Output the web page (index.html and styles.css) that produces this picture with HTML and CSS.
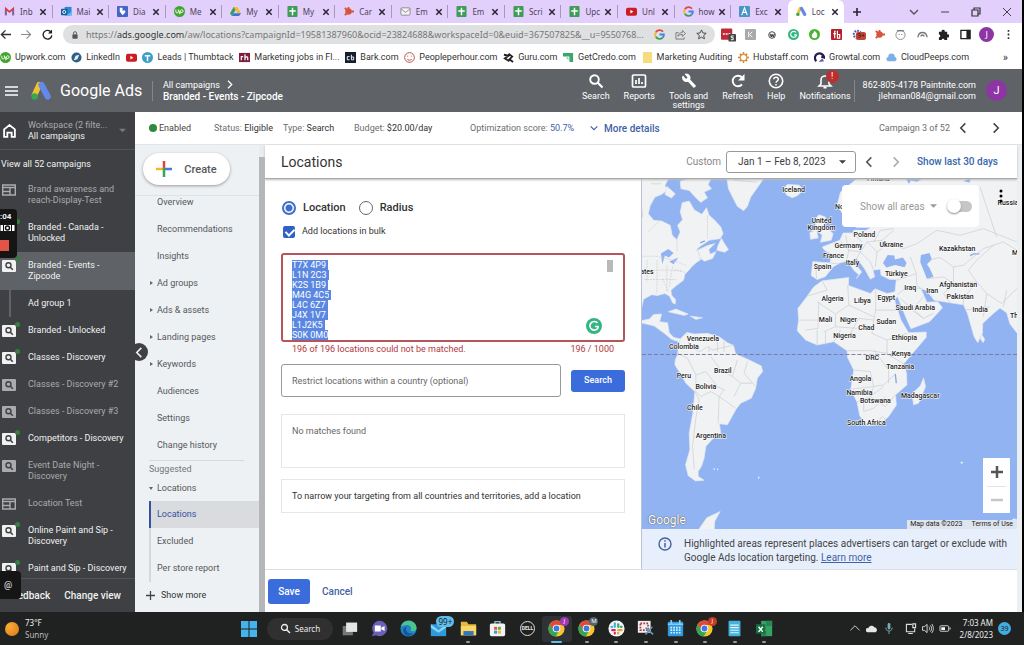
FILE: index.html
```html
<!DOCTYPE html>
<html lang="en">
<head>
<meta charset="utf-8">
<meta name="viewport" content="width=device-width, initial-scale=1">
<title>Locations - Google Ads</title>
<link rel="stylesheet" href="styles.css">
</head>
<body>
<svg class="defs" aria-hidden="true">
  <symbol id="close" viewBox="0 0 8 8"><path d="M1.3 1.3l5.4 5.4M6.7 1.3L1.3 6.7" stroke="#2b2433" stroke-width="1.5"/></symbol>
  <symbol id="gmail" viewBox="0 0 12 12"><path d="M2 10V3l4 3.4L10 3v7" fill="none" stroke="#d8403a" stroke-width="2"/><path d="M1 4v6h1.800V5zM11 4v6H9.200V5z" fill="#5f6fc0"/></symbol>
  <symbol id="outlook" viewBox="0 0 12 12"><path d="M4 1h7.500v9H4z" fill="#2b88d8"/><path d="M4 6l4 3 3.500-3v5H4z" fill="#69b9ee"/><rect y="3" width="7" height="7" rx="1" fill="#155b9e"/><circle cx="3.500" cy="6.500" r="1.700" fill="none" stroke="#fff"/></symbol>
  <symbol id="diag" viewBox="0 0 12 12"><rect width="12" height="12" rx="1" fill="#4565c8"/><path d="M3 2h3v3h3v2L6 10 3 6z" fill="#fff"/></symbol>
  <symbol id="upwork" viewBox="0 0 12 12"><circle cx="6" cy="6" r="6" fill="#3fa52c"/><path d="M2 4v2.200a1.400 1.400 0 0 0 2.800 0V4c.5 2 1.500 3.500 2.500 4M6 9l1-4c.7-1.500 3-1 3 .6S7.500 7.700 6.700 6" fill="none" stroke="#fff"/></symbol>
  <symbol id="drive" viewBox="0 0 12 12"><path d="M4 1h4L4 8 2 11 0 8z" fill="#35a05a"/><path d="M4 1h4l4 7H8z" fill="#f2bd2c"/><path d="M4 8h8l-2 3H2z" fill="#3d73d9"/></symbol>
  <symbol id="sheet" viewBox="0 0 12 12"><rect x=".5" width="11" height="12" rx="1" fill="#3f9d58"/><path d="M6 2v8M2.500 5.500h7" stroke="#fff" stroke-width="1.600"/></symbol>
  <symbol id="hubspot" viewBox="0 0 12 12"><circle cx="6" cy="6" r="3.500" fill="#d9533c"/><path d="M2 2l4 4-4 4M6 1v5h6" stroke="#d9533c" stroke-width="2" fill="none"/></symbol>
  <symbol id="mail" viewBox="0 0 12 12"><rect x="1" y="2" width="10" height="8" rx="1" fill="#f7f3f7" stroke="#8d8790"/><path d="M1 3l5 4 5-4" fill="none" stroke="#8d8790"/></symbol>
  <symbol id="youtube" viewBox="0 0 12 12"><rect y="2" width="12" height="8.500" rx="2" fill="#cc1d24"/><path d="M4.800 4.200L8 6.200 4.800 8.200z" fill="#fff"/></symbol>
  <symbol id="google" viewBox="0 0 12 12"><g fill="none" stroke-width="2"><path d="M9.800 3A4.800 4.800 0 0 0 2 3.500" stroke="#e04838"/><path d="M2 3.500a4.800 4.800 0 0 0 0 5" stroke="#f2b92f"/><path d="M2 8.500a4.800 4.800 0 0 0 7.300 1" stroke="#36a456"/><path d="M9.300 9.500A4.800 4.800 0 0 0 10.800 6H6" stroke="#4b7ee8"/></g></symbol>
  <symbol id="letterA" viewBox="0 0 12 12"><rect width="12" height="12" rx="1" fill="#4896c4"/><path d="M3 10l3-8 3 8M4 7h4" fill="none" stroke="#fff" stroke-width="1.200"/></symbol>
  <symbol id="ads" viewBox="0 0 22 20"><path d="M8.500 3.500L3.800 14" stroke="#f1c232" stroke-width="6" stroke-linecap="round"/><path d="M11 3.800l6.500 12" stroke="#6489ea" stroke-width="6.500" stroke-linecap="round"/><circle cx="3.800" cy="15.800" r="3.400" fill="#35a853"/></symbol>
  <symbol id="search" viewBox="0 0 16 16"><circle cx="6.500" cy="6.500" r="4.300" fill="none" stroke="currentColor" stroke-width="1.900"/><path d="M9.800 9.800l4.700 4.700" stroke="currentColor" stroke-width="2.200"/></symbol>
  <symbol id="left" viewBox="0 0 12 12"><path d="M8 1L3 6l5 5" fill="none" stroke="currentColor" stroke-width="1.700"/></symbol>
  <symbol id="right" viewBox="0 0 12 12"><path d="M4 1l5 5-5 5" fill="none" stroke="currentColor" stroke-width="1.700"/></symbol>
  <symbol id="down" viewBox="0 0 12 12"><path d="M2 4l4 4 4-4" fill="none" stroke="currentColor" stroke-width="1.400"/></symbol>
  <symbol id="tri" viewBox="0 0 8 8"><path d="M0 2h8L4 6z" fill="currentColor"/></symbol>
  <symbol id="camp" viewBox="0 0 14 12"><rect width="14" height="12" rx="1" fill="currentColor"/><circle cx="6.500" cy="5.300" r="2.500" fill="none" stroke="#3e4043" stroke-width="1.400"/><path d="M8.300 7.200l2.500 2.600" stroke="#3e4043" stroke-width="1.600"/></symbol>
  <symbol id="display" viewBox="0 0 14 12"><path d="M.7 1h12.600v10H.7zM.7 3.500h12.600M.7 7.500h7M8 4v7" fill="none" stroke="currentColor" stroke-width="1.400"/></symbol>
  <symbol id="grammarly" viewBox="0 0 16 16"><circle cx="8" cy="8" r="8" fill="#35b581"/><path d="M11.500 5A4.300 4.300 0 1 0 12 9.800V8.500H9" fill="none" stroke="#fff" stroke-width="1.600"/></symbol>
  <symbol id="chrome" viewBox="0 0 20 20"><circle cx="10" cy="10" r="9.500" fill="#f6c52f"/><path d="M1.800 5.200A9.500 9.500 0 0 1 18.500 6H10L6 12z" fill="#df4a3b"/><path d="M1.800 5.200A9.500 9.500 0 0 0 9 19.500L13.500 12 6.500 12z" fill="#36a455"/><circle cx="10" cy="10" r="4.500" fill="#fff"/><circle cx="10" cy="10" r="3.400" fill="#3c78df"/></symbol>
</svg>

<div class="screen">
  <header class="browser">
    <div class="tabbar">
      <div class="tabs">
        <div class="tab"><svg><use href="#gmail"/></svg><span>Inb</span><svg class="x"><use href="#close"/></svg></div>
        <div class="tab"><svg><use href="#outlook"/></svg><span>Mai</span><svg class="x"><use href="#close"/></svg></div>
        <div class="tab"><svg><use href="#diag"/></svg><span>Dia</span><svg class="x"><use href="#close"/></svg></div>
        <div class="tab"><svg><use href="#upwork"/></svg><span>Me</span><svg class="x"><use href="#close"/></svg></div>
        <div class="tab"><svg><use href="#drive"/></svg><span>My</span><svg class="x"><use href="#close"/></svg></div>
        <div class="tab"><svg><use href="#sheet"/></svg><span>My</span><svg class="x"><use href="#close"/></svg></div>
        <div class="tab"><svg><use href="#hubspot"/></svg><span>Car</span><svg class="x"><use href="#close"/></svg></div>
        <div class="tab"><svg><use href="#mail"/></svg><span>Em</span><svg class="x"><use href="#close"/></svg></div>
        <div class="tab"><svg><use href="#sheet"/></svg><span>Em</span><svg class="x"><use href="#close"/></svg></div>
        <div class="tab"><svg><use href="#sheet"/></svg><span>Scri</span><svg class="x"><use href="#close"/></svg></div>
        <div class="tab"><svg><use href="#sheet"/></svg><span>Upc</span><svg class="x"><use href="#close"/></svg></div>
        <div class="tab"><svg><use href="#youtube"/></svg><span>Unl</span><svg class="x"><use href="#close"/></svg></div>
        <div class="tab"><svg><use href="#google"/></svg><span>how</span><svg class="x"><use href="#close"/></svg></div>
        <div class="tab last"><svg><use href="#letterA"/></svg><span>Exc</span><svg class="x"><use href="#close"/></svg></div>
        <div class="tab active"><svg><use href="#ads"/></svg><span>Loc</span><svg class="x"><use href="#close"/></svg></div>
      </div>
      <button class="newtab" aria-label="New tab"><svg viewBox="0 0 10 10"><path d="M5 1v8M1 5h8" stroke="#2b2433" stroke-width="1.600"/></svg></button>
      <div class="winctl">
        <svg><use href="#down"/></svg>
        <svg viewBox="0 0 12 12"><path d="M2 6h8" stroke="#444"/></svg>
        <svg viewBox="0 0 12 12"><path d="M2 4h6v6H2zM4 4V2h6v6H8" fill="none" stroke="#333" stroke-width="1.200"/></svg>
        <svg viewBox="0 0 12 12"><path d="M2 2l8 8M10 2l-8 8" stroke="#444"/></svg>
      </div>
    </div>
    <div class="toolbar">
      <div class="nav">
        <svg viewBox="0 0 12 12"><path d="M12 6H2M6 1.500L1.500 6 6 10.500" fill="none" stroke="#333" stroke-width="1.500"/></svg>
        <svg viewBox="0 0 12 12"><path d="M0 6h10M6 1.500L10.500 6 6 10.500" fill="none" stroke="#8a8a8a" stroke-width="1.200"/></svg>
        <svg viewBox="0 0 12 12"><path d="M10 3.500A4.800 4.800 0 1 0 10.800 7" fill="none" stroke="#222" stroke-width="1.500"/><path d="M11 .5V5H6.500z" fill="#222"/></svg>
      </div>
      <div class="omnibox">
        <svg class="lock" viewBox="0 0 8 10"><rect x=".5" y="4" width="7" height="6" rx="1" fill="#555"/><path d="M2 4V2.500a2 2 0 0 1 4 0V4" fill="none" stroke="#555" stroke-width="1.200"/></svg>
        <div class="url">https://<b>ads.google.com</b>/aw/locations?campaignId=19581387960&amp;ocid=23824688&amp;workspaceId=0&amp;euid=367507825&amp;__u=9550768...</div>
        <svg><use href="#google"/></svg>
        <svg viewBox="0 0 12 12"><path d="M4 4H1v7h9V9M3 8c.5-3 2.500-4 5-4V1.500L11.500 5 8 8V6C6 6 4.500 6.500 3 8z" fill="none" stroke="#777"/></svg>
        <svg viewBox="0 0 12 12"><path d="M6 1l1.500 3.300 3.600.4-2.700 2.400.8 3.600L6 8.900l-3.200 1.800.8-3.600L.9 4.700l3.600-.4z" fill="none" stroke="#444"/></svg>
      </div>
      <div class="exts">
        <i><svg viewBox="0 0 16 14"><rect width="12" height="12" rx="1" fill="#c02a35"/><path d="M2 6h8" stroke="#fff" stroke-width="1.500" stroke-dasharray="2 1"/><rect x="8" y="6" width="8" height="8" rx="1" fill="#444"/><path d="M13.500 8H11v1.800h2V12h-2.500" fill="none" stroke="#fff"/></svg></i>
        <i><svg viewBox="0 0 12 12"><rect width="12" height="12" rx="1" fill="#a9a9a9"/><path d="M4 3v6M8 3L5 6l3 3" stroke="#fff" fill="none"/></svg></i>
        <i><svg class="sm" viewBox="0 0 12 12"><circle cx="6" cy="6" r="5" fill="#eee" stroke="#555" stroke-width="1.500"/><path d="M3 4l2 5 1-4 2 4 1.500-5" fill="none" stroke="#333" stroke-width="1.500"/></svg></i>
        <i><svg><use href="#grammarly"/></svg></i>
        <i><svg viewBox="0 0 12 12"><circle cx="6" cy="6" r="6" fill="#48b52e"/><path d="M6 2c2 2 3 3 3 5a3 3 0 0 1-6 0c0-1.500 2-2 3-5z" fill="#fff"/></svg></i>
        <i><svg viewBox="0 0 12 12"><rect width="12" height="12" rx="1" fill="#b41f2b"/><path d="M5 2.500H4V10M2.500 5h3M7 2v8h2.500V6H7" fill="none" stroke="#fff" stroke-width="1.300"/></svg></i>
        <i class="badged"><svg viewBox="0 0 12 12"><circle cx="6" cy="6" r="4" fill="none" stroke="#6762b3" stroke-width="2.500" stroke-dasharray="2 1"/></svg><em>9+</em></i>
        <i><svg><use href="#hubspot"/></svg></i>
        <i><svg viewBox="0 0 12 12"><circle cx="6" cy="6.500" r="5" fill="#fff" stroke="#888"/><path d="M2 2h8M4 6h1M7 6h1" stroke="#555"/></svg></i>
        <i><svg viewBox="0 0 12 12"><path d="M1 9c1-7 9-7 10 0M4 8c1-2 3-2 4 0" fill="none" stroke="#777" stroke-width="1.500"/></svg></i>
        <i><svg viewBox="0 0 12 12"><path d="M1 3h3a1.700 1.700 0 1 1 3.300 0H10v3a1.700 1.700 0 1 1 0 3v3H7a1.500 1.500 0 0 0-3 0H1V9a1.500 1.500 0 0 0 0-3z" fill="#222"/></svg></i>
        <i><svg viewBox="0 0 12 12"><path d="M1 1.500h10v9H1z" fill="none" stroke="#222" stroke-width="1.500"/><path d="M7 1h4v10H7z" fill="#222"/></svg></i>
        <i class="face">J</i>
        <i><svg viewBox="0 0 12 12"><path d="M6 1v2M6 5v2M6 9v2" stroke="#333" stroke-width="1.800"/></svg></i>
      </div>
    </div>
    <nav class="bookmarks">
      <a href="#"><svg><use href="#upwork"/></svg>Upwork.com</a>
      <a href="#"><svg viewBox="0 0 12 12"><circle cx="6" cy="6" r="5.500" fill="#2d6087"/><path d="M3 9l2-5 4-1-2 5z" fill="#e8f0f5"/></svg>LinkedIn</a>
      <a href="#" aria-label="YouTube"><svg><use href="#youtube"/></svg></a>
      <a href="#"><svg viewBox="0 0 12 12"><circle cx="6" cy="6" r="6" fill="#3c9fc9"/><path d="M3 4h6M6 4v6" stroke="#fff" stroke-width="1.600"/></svg>Leads | Thumbtack</a>
      <a href="#"><svg viewBox="0 0 12 12"><rect y="1" width="12" height="10" fill="#7a1e3c"/><path d="M2.500 9V5h2M6.500 2.500V9M6.500 6c1-1 3-1 3 0v3" fill="none" stroke="#fff" stroke-width="1.300"/></svg>Marketing jobs in Fl...</a>
      <a href="#"><svg viewBox="0 0 12 12"><rect width="12" height="12" fill="#14202e"/><path d="M5 5H2.500v3.500H5M7 3v5.500h2.500V5.500H7" fill="none" stroke="#fff"/></svg>Bark.com</a>
      <a href="#"><svg viewBox="0 0 12 12"><circle cx="6" cy="6" r="5.300" fill="#fff" stroke="#b5443c"/><path d="M3.500 4.500h1M7.500 4.500h1M3.500 7.500c1 2 4 2 5 0" fill="none" stroke="#b5443c"/></svg>Peopleperhour.com</a>
      <a href="#"><svg viewBox="0 0 12 12"><path d="M1 3l5 1-4 3 5 3M6 2l4 3-3 3 4 3" fill="none" stroke="#222" stroke-width="2"/></svg>Guru.com</a>
      <a href="#"><svg viewBox="0 0 12 12"><path d="M0 1h11v10H7V5H0z" fill="#39a86a"/><path d="M3 6h3v3z" fill="#88d0a5"/></svg>GetCredo.com</a>
      <a href="#"><svg viewBox="0 0 12 12"><path d="M1 0h10v12H1z" fill="#f5dc7e"/></svg>Marketing Auditing</a>
      <a href="#"><svg viewBox="0 0 12 12"><circle cx="6" cy="6" r="3.600" fill="none" stroke="#df9a43" stroke-width="1.500"/><path d="M6 0v2M6 10v2M0 6h2M10 6h2M2 2l1.500 1.500M10 2L8.500 3.500M2 10l1.500-1.500M10 10L8.500 8.500" stroke="#d37e31" stroke-width="1.600"/></svg>Hubstaff.com</a>
      <a href="#"><svg viewBox="0 0 12 12"><path d="M2.500 10A5 5 0 1 1 11 6L8 5" fill="none" stroke="#241d52" stroke-width="2.400"/><path d="M5 11l6-1-2-3z" fill="#5a55a9"/></svg>Growtal.com</a>
      <a href="#"><svg viewBox="0 0 12 12"><path d="M2 10a2.500 2.500 0 0 1 .5-4.800 3.500 3.500 0 0 1 7 0A2.500 2.500 0 0 1 10 10z" fill="#7cb0e8"/></svg>CloudPeeps.com</a>
      <span class="more">»</span>
    </nav>
  </header>

  <header class="adsbar">
    <button class="burger" aria-label="Menu"><svg viewBox="0 0 13 10"><path d="M0 1h13M0 5h13M0 9h13" stroke="#fff" stroke-width="1.500"/></svg></button>
    <svg class="logo"><use href="#ads"/></svg>
    <div class="brand">Google Ads</div>
    <div class="crumbs"><div>All campaigns <svg><use href="#right"/></svg></div><strong>Branded - Events - Zipcode</strong></div>
    <div class="tools">
      <button><svg><use href="#search"/></svg>Search</button>
      <button><svg viewBox="0 0 16 16"><rect x="1.500" y="2" width="13" height="12" rx="1" fill="none" stroke="#fff" stroke-width="1.700"/><path d="M5 7v4M8 5v6M11 9v2" stroke="#fff" stroke-width="1.700"/></svg>Reports</button>
      <button><svg viewBox="0 0 16 16"><path d="M7 6.500l7 7.500" stroke="#fff" stroke-width="3.200"/><path d="M2 2.500L5 6l1.500-1.500L3.500 1A4.200 4.200 0 1 1 1.500 3z" fill="#fff"/></svg>Tools and<br>settings</button>
      <button><svg viewBox="0 0 16 16"><path d="M12 11.500A5.300 5.300 0 1 1 12 4.500" fill="none" stroke="#fff" stroke-width="1.900"/><path d="M14.500 1v6.500H8z" fill="#fff"/></svg>Refresh</button>
      <button><svg viewBox="0 0 16 16"><circle cx="8" cy="8" r="6.700" fill="none" stroke="#fff" stroke-width="1.600"/><path d="M5.800 6.300c0-3 4.500-2.700 4.500 0C10.300 8 8 8 8 9.800M8 11v1.500" fill="none" stroke="#fff" stroke-width="1.500"/></svg>Help</button>
      <button class="bell"><svg viewBox="0 0 16 16"><path d="M2 13h12l-2-2V7a4 4 0 0 0-8 0v4z" fill="none" stroke="#fff" stroke-width="1.600"/><path d="M6.500 14.500h3" stroke="#fff" stroke-width="2"/></svg><em>!</em>Notifications</button>
    </div>
    <div class="account">862-805-4178 Paintnite.com<br>jlehman084@gmail.com</div>
    <div class="avatar">J</div>
  </header>

  <div class="body">
    <aside class="side">
      <div class="workspace"><svg class="home" viewBox="0 0 12 13"><path d="M1 5l5-4 5 4v7H8V8H4v4H1z" fill="none" stroke="#fff" stroke-width="1.700"/></svg><div><span>Workspace (2 filte...</span><br>All campaigns</div><svg class="tri"><use href="#tri"/></svg></div>
      <a class="viewall" href="#">View all 52 campaigns</a>
      <ul>
        <li class="off"><svg><use href="#display"/></svg>Brand awareness and reach-Display-Test</li>
        <li class="on early"><svg><use href="#camp"/></svg>Branded - Canada - Unlocked</li>
        <li class="on early cur"><svg><use href="#camp"/></svg>Branded - Events - Zipcode</li>
        <li class="group">Ad group 1</li>
        <li class="on"><svg><use href="#camp"/></svg>Branded - Unlocked</li>
        <li class="on"><svg><use href="#camp"/></svg>Classes - Discovery</li>
        <li class="off"><svg><use href="#camp"/></svg>Classes - Discovery #2</li>
        <li class="off"><svg><use href="#camp"/></svg>Classes - Discovery #3</li>
        <li class="on"><svg><use href="#camp"/></svg>Competitors - Discovery</li>
        <li class="off"><svg><use href="#camp"/></svg>Event Date Night - Discovery</li>
        <li class="off"><svg><use href="#display"/></svg>Location Test</li>
        <li class="on"><svg><use href="#camp"/></svg>Online Paint and Sip - Discovery</li>
        <li class="on"><svg><use href="#camp"/></svg>Paint and Sip - Discovery</li>
      </ul>
      <div class="sidefoot"><button>Feedback</button><button>Change view</button></div>
      <button class="collapse" aria-label="Collapse"><svg><use href="#left"/></svg></button>
      <div class="recorder"><span>:04</span><svg viewBox="0 0 14 6"><path d="M0 0h14v6H0z" fill="#fff"/><circle cx="7" cy="3" r="2" fill="none" stroke="#111" stroke-width="1.500"/><path d="M3 0v6M11 0v6" stroke="#111"/></svg><b></b></div>
      <div class="at">@</div>
    </aside>

    <div class="content">
      <div class="status">
        <span class="enabled">Enabled</span>
        <span>Status: <b>Eligible</b></span>
        <span>Type: <b>Search</b></span>
        <span>Budget: <b>$20.00/day</b></span>
        <span>Optimization score: <a href="#">50.7%</a></span>
        <a class="details" href="#"><svg><use href="#down"/></svg>More details</a>
        <span class="count">Campaign 3 of 52</span>
        <button aria-label="Previous campaign"><svg><use href="#left"/></svg></button>
        <button aria-label="Next campaign"><svg><use href="#right"/></svg></button>
      </div>
      <div class="panes">
        <nav class="pages">
          <div class="createbox"><button class="create"><svg viewBox="0 0 16 16"><path d="M8 0v8" stroke="#d9453a" stroke-width="2.500"/><path d="M8 8h8" stroke="#4a78dc" stroke-width="2.500"/><path d="M0 8h8" stroke="#f0b92e" stroke-width="2.500"/><path d="M8 7v9" stroke="#3aa356" stroke-width="2.500"/></svg>Create</button></div>
          <div class="links">
            <a href="#">Overview</a>
            <a href="#">Recommendations</a>
            <a href="#">Insights</a>
            <a href="#" class="sub">Ad groups</a>
            <a href="#" class="sub">Ads &amp; assets</a>
            <a href="#" class="sub">Landing pages</a>
            <a href="#" class="sub">Keywords</a>
            <a href="#">Audiences</a>
            <a href="#">Settings</a>
            <a href="#">Change history</a>
            <div class="suggested">Suggested</div>
            <a href="#" class="open">Locations</a>
            <div class="children"><a href="#" class="sel">Locations</a><a href="#">Excluded</a><a href="#">Per store report</a></div>
            <a href="#" class="showmore"><svg viewBox="0 0 10 10"><path d="M5 0v10M0 5h10" stroke="#444" stroke-width="1.400"/></svg>Show more</a>
          </div>
        </nav>
        <div class="scroll"><i></i></div>
        <main>
          <div class="titlebar">
            <h1>Locations</h1>
            <label for="range">Custom</label>
            <div class="range"><select id="range"><option>Jan 1 – Feb 8, 2023</option></select><svg><use href="#tri"/></svg></div>
            <button aria-label="Previous period"><svg><use href="#left"/></svg></button>
            <button class="dim" aria-label="Next period"><svg><use href="#right"/></svg></button>
            <a href="#">Show last 30 days</a>
          </div>
          <div class="split">
            <form class="form">
              <div class="radios">
                <label><input type="radio" name="mode" checked>Location</label>
                <label><input type="radio" name="mode">Radius</label>
              </div>
              <label class="bulk"><input type="checkbox" checked>Add locations in bulk</label>
              <div class="bulkbox">
                <textarea id="codes" aria-label="Locations" spellcheck="false">T7X 4P9
L1N 2C3
K2S 1B9
M4G 4C5
L4C 6Z7
J4X 1V7
L1J2K5
S0K 0M0</textarea>
                <i class="thumb"></i><svg class="gram"><use href="#grammarly"/></svg>
              </div>
              <div class="error"><span>196 of 196 locations could not be matched.</span><span>196 / 1000</span></div>
              <div class="country"><input type="text" aria-label="Restrict locations within a country" placeholder="Restrict locations within a country (optional)"><button type="button" class="primary">Search</button></div>
              <div class="box nomatch">No matches found</div>
              <div class="box narrow">To narrow your targeting from all countries and territories, add a location</div>
            </form>
            <section class="mapcol">
              <div class="map">
                <svg class="world" viewBox="0 0 376 352" preserveAspectRatio="xMidYMid slice">
                  <rect width="376" height="352" fill="#92b3f1"/>
                  <g transform="translate(-1 -8) scale(.3333)">
                    <g fill="#f1f2f3" stroke="#e3e8f1" stroke-width="2">
                      <path d="M0 20H85L72 45 80 58 62 72 42 80 28 105 22 130 38 150 62 152 88 165 94 195 108 208 118 185 110 165 125 148 118 125 124 97 145 92 160 118 183 132 197 112 205 135 222 150 240 170 247 190 238 205 205 210 175 230 165 242 200 226 222 220 204 238 208 252 226 244 215 265 190 273 182 266 165 278 152 290 142 302 132 312 128 330 104 348 90 360 92 375 104 388 103 402 95 398 86 378 72 370 50 376 32 374 8 387 3 408 0 420z"/>
                      <path d="M0 452L25 447 38 433 62 432 56 455 80 458 85 488 98 502 122 508 116 516 92 508 70 490 40 468 0 458z"/>
                      <path d="M120 505L138 487 160 492 200 490 235 500 260 518 278 526 285 552 330 572 362 588 366 605 350 625 345 655 332 685 300 700 286 718 260 765 236 762 240 790 215 808 195 830 190 865 182 890 172 905 172 920 190 932 164 934 142 918 134 885 147 840 145 790 156 730 162 665 135 640 118 610 102 585 103 570 110 555 112 535z"/>
                      <path d="M258 20H372L350 52 330 80 320 108 309 121 290 108 278 85 263 55z"/>
                      <path d="M118 32L155 22 212 22 202 42 212 55 190 65 200 82 180 96 165 82 145 60 120 55zM78 48L103 70 92 83 72 72zM232 225L242 204 250 218 263 238 252 246 228 240z"/>
                      <path d="M428 55L440 42 475 44 490 58 470 76 455 82 438 74zM522 150L535 133 555 140 552 165 578 190 572 210 540 216 545 195 530 180zM508 187L528 178 533 203 510 207z"/>
                      <path d="M655 20L600 65 590 105 620 150 650 168 635 188 608 188 598 210 545 230 552 240 574 252 568 278 517 274 512 316 530 328 554 320 578 290 598 278 622 272 640 300 655 314 648 325 664 305 636 270 648 263 672 295 690 327 703 320 698 300 720 297 722 315 748 328 768 328 764 365 740 370 704 356 690 370 624 346 625 322 545 332 520 350 500 378 472 415 474 450 470 482 495 510 530 525 580 515 620 542 621 562 640 600 631 658 650 697 658 738 680 768 722 762 745 740 768 706 766 675 800 645 799 610 790 582 812 556 858 502 858 486 805 488 782 450 762 388 772 380 796 440 812 476 868 455 907 413 893 395 860 396 842 355 860 362 882 390 930 398 970 404 982 430 1002 500 1013 518 1027 490 1028 460 1060 430 1080 414 1100 428 1110 462 1140 500V20z"/>
                      <path d="M850 624L856 650 835 700 820 705 815 672 840 648zM1024 492L1034 508 1029 518 1022 508zM82 425L105 417 142 432 130 436zM148 438L185 443 165 448zM172 1082L198 1045 238 1026 222 1055 220 1082zM1112 1058L1120 1048 1131 1050V1060z"/>
                    </g>
                    <path d="M728 278L742 254 762 256 764 268 788 262 799 278 793 291 765 284 738 292zM842 254L868 248 875 268 860 282 868 293 880 320 860 326 850 300 840 275zM60 250L82 236 98 248 84 262 72 256 64 282zM85 274L112 262 98 282zM795 22H852L830 34 812 30 806 40zM970 32L994 22 988 36zM612 172H690L675 180 640 178z" fill="#92b3f1"/>
                    <path d="M990 256L1000 251 1018 251M750 552L754 560M765 612L768 640M178 218L192 212" fill="none" stroke="#87a8df" stroke-width="4"/>
                    <g fill="none" stroke="#c9cbce" stroke-width="2">
                      <path d="M0 258H45L95 270 135 285M8 300H125M10 328H105M18 270V335M48 270V370M78 285V365M95 290L85 350M108 208L108 245M20 185L58 150M200 135V205M170 235L180 270M100 300L132 306M65 325L82 365" stroke-dasharray="6 3"/>
                      <path d="M545 332L560 360 500 378M530 395L585 432 625 405 622 345M535 395L532 475 495 480M585 432L585 470 550 485M625 405L700 440M706 360V420H775M706 420L700 450 655 445 630 490M700 450L695 490 740 510 800 490M585 470L650 475M555 485V525M530 480V525M620 542H690L740 550 790 582M740 510L740 555M640 600L690 605 700 650 730 645 765 612M632 658L700 650 690 680M650 697L690 680 730 650M690 680L735 710 765 675M700 540L745 600 745 640M475 450H535M580 515L600 480"/>
                      <path d="M720 760a7 9 0 1 0 12-15a7 9 0 1 0-12 15M670 690V725L700 715 735 680"/>
                      <path d="M525 276L528 325M568 278L600 282M600 212L625 240 618 272M615 195L625 240 660 245 680 215 725 210 760 180M635 188L665 215M660 245L650 263M680 215L710 245 725 235M710 245L705 290M660 245L690 275 700 300M700 215L720 180 760 175M720 210L790 235 830 220 890 180 960 195 1030 175 1131 215M870 268L900 262 940 290 970 285 1030 235 1090 215 1131 240M770 330L828 310 830 345 842 355M828 310L810 260M770 375L800 350 842 355M862 326L910 320 940 340 910 370 930 398M940 340L1010 335 970 385 970 404M1010 335L985 300 1010 270 1060 225M1010 335L1040 370 1085 400M1040 370L1030 440M1085 400L1131 355M1090 410L1100 360M850 380L815 420 850 445 880 430M780 385L850 445M975 420L1050 410M940 290L940 340M860 60L900 160M1020 50L1050 140 1070 200"/>
                      <path d="M138 490L145 530 178 545 200 530 215 540 280 525M110 550L140 565 165 615 195 605 230 650 250 660 235 680 285 715M165 615L165 665 180 680 210 665 235 680M162 665L175 690 165 745 155 830 160 900M235 680L232 760M205 530V545M230 510V545M250 515V545M290 570L275 620 300 640 280 680M320 575L310 610 345 650M300 640L335 640M275 620L240 600 210 560"/>
                      <path d="M0 100L5 140M60 40L30 40M280 30L350 35"/>
                    </g>
                    <path d="M218 898H222M229 899H232M352 924H356M962 879H968" stroke="#f1f2f3" stroke-width="5"/>
                  </g>
                  <path d="M0 176.500H376" stroke="#8278a4" stroke-dasharray="4 2"/>
                  <g class="names">
                    <text x="152" y="14">Iceland</text><text x="237" y="3">Finland</text><text x="198" y="31">No</text><text x="367" y="27">Russia</text>
                    <text x="180" y="45">United</text><text x="180" y="52">Kingdom</text><text x="223" y="59">Poland</text><text x="207" y="70">Germany</text><text x="250" y="69">Ukraine</text><text x="316" y="73">Kazakhstan</text><text x="374" y="77">M</text>
                    <text x="192" y="80">France</text><text x="181" y="91">Spain</text><text x="211" y="87">Italy</text><text x="255" y="98">Türkiye</text><text x="269" y="112">Iraq</text><text x="291" y="115">Iran</text><text x="317" y="109">Afghanistan</text><text x="319" y="121">Pakistan</text><text x="339" y="134">India</text><text x="373" y="140">Th</text>
                    <text x="5" y="96">ates</text><text x="191" y="123">Algeria</text><text x="221" y="125">Libya</text><text x="245" y="122">Egypt</text><text x="274" y="132">Saudi Arabia</text><text x="184" y="144">Mali</text><text x="207" y="144">Niger</text><text x="225" y="152">Chad</text><text x="245" y="146">Sudan</text><text x="203" y="160">Nigeria</text><text x="263" y="162">Ethiopia</text><text x="260" y="178">Kenya</text><text x="231" y="182">DRC</text><text x="259" y="191">Tanzania</text><text x="219" y="203">Angola</text><text x="218" y="217">Namibia</text><text x="234" y="225">Botswana</text><text x="279" y="220">Madagascar</text><text x="225" y="247">South Africa</text>
                    <text x="61" y="163">Venezuela</text><text x="42" y="171">Colombia</text><text x="81" y="195">Brazil</text><text x="42" y="200">Peru</text><text x="64" y="211">Bolivia</text><text x="53" y="232">Chile</text><text x="69" y="260">Argentina</text>
                  </g>
                </svg>
                <div class="areas"><span>Show all areas</span><svg><use href="#tri"/></svg><input type="checkbox" aria-label="Show all areas"></div>
                <svg class="kebab" viewBox="0 0 4 14"><circle cx="2" cy="2" r="1.500"/><circle cx="2" cy="7" r="1.500"/><circle cx="2" cy="12" r="1.500"/></svg>
                <div class="zoom"><button aria-label="Zoom in"><svg viewBox="0 0 12 12"><path d="M6 0v12M0 6h12" stroke="#555" stroke-width="2.500"/></svg></button><button aria-label="Zoom out"><svg viewBox="0 0 12 12"><path d="M0 6h12" stroke="#c6c6c6" stroke-width="2.500"/></svg></button></div>
                <div class="gword">Google</div>
                <div class="terms"><span>Map data ©2023</span><a href="#">Terms of Use</a></div>
              </div>
              <div class="info"><svg viewBox="0 0 14 14"><circle cx="7" cy="7" r="6" fill="none" stroke="#40629f" stroke-width="1.400"/><path d="M7 6v4.500M7 3.300v1.500" stroke="#40629f" stroke-width="1.500"/></svg><p>Highlighted areas represent places advertisers can target or exclude with Google Ads location targeting. <a href="#">Learn more</a></p></div>
            </section>
          </div>
          <div class="actions"><button class="primary">Save</button><button class="cancel">Cancel</button></div>
        </main>
        <div class="gutter"></div>
      </div>
    </div>
  </div>

  <footer class="taskbar">
    <div class="weather"><i></i><div>73°F<br><span>Sunny</span></div></div>
    <svg class="win" viewBox="0 0 16 16"><path d="M0 0h7.500v7.500H0zM8.500 0H16v7.500H8.500zM0 8.500h7.500V16H0zM8.500 8.500H16V16H8.500z" fill="#45b4ec"/></svg>
    <button class="tsearch"><svg><use href="#search"/></svg>Search</button>
    <div class="apps">
      <i><svg viewBox="0 0 20 20"><path d="M2 7h12v11H2z" fill="#777"/><path d="M6 3h13v11H6z" fill="#e5e5e5"/></svg></i>
      <i><svg viewBox="0 0 20 20"><path d="M10 1a9 9 0 1 1-4 17l-5 1 2-4A9 9 0 0 1 10 1z" fill="#6a60b8"/><path d="M4.500 6.500h7v7h-7zM12 9l4-2v6l-4-2z" fill="#fff"/></svg></i>
      <i><svg viewBox="0 0 20 20"><circle cx="10" cy="10" r="9.500" fill="#2283c9"/><path d="M1 8C3-1 18-2 19.500 9c0 5-6 5-7 3 2-3-1-6-4-6S2 7 1 8z" fill="#4cc58a"/><path d="M8 8c-3 4 1 9 8 8-4 4-11 3-12-2-1-3 1-6 4-6z" fill="#14559b"/></svg></i>
      <i class="mailapp"><svg viewBox="0 0 20 20"><path d="M1 5h18v14H1z" fill="#2d9bdc"/><path d="M1 5l9 7 9-7v4l-9 6-9-6z" fill="#8bd3f5"/></svg><em>99+</em></i>
      <i class="run"><svg viewBox="0 0 20 20"><path d="M1 2h7l2 3h9v13H1z" fill="#e9b63a"/><path d="M1 7h18v11H1z" fill="#f9d668"/><path d="M4 13h12v5H4z" fill="#2f78c0"/></svg></i>
      <i><svg viewBox="0 0 20 20"><path d="M7 5V2h6v3" fill="none" stroke="#8ac4dd" stroke-width="1.500"/><rect x="1" y="4" width="18" height="15" rx="2" fill="#f3f3f3"/><path d="M6 8h3.500v3.500H6z" fill="#e05b3d"/><path d="M10.500 8H14v3.500h-3.500z" fill="#6caa43"/><path d="M6 12.500h3.500V16H6z" fill="#3b96d2"/><path d="M10.500 12.500H14V16h-3.500z" fill="#e9b93b"/></svg></i>
      <i class="dell"><b>DELL</b></i>
      <i class="act"><svg><use href="#chrome"/></svg><em class="p">J</em></i>
      <i class="run"><svg><use href="#chrome"/></svg><em class="g">M</em></i>
      <i class="run"><svg viewBox="0 0 20 20"><circle cx="10" cy="10" r="9.500" fill="#f5f5f5"/><g stroke-width="2.600" stroke-linecap="round"><path d="M8 4v4" stroke="#41b4da"/><path d="M4 8h1" stroke="#41b4da"/><path d="M12 5v3M15 8h1" stroke="#3aa679"/><path d="M5 12h3M8 15v1" stroke="#cf2b5d"/><path d="M12 12h4M12 15v1" stroke="#e1ac33"/></g></svg></i>
      <i class="run"><svg viewBox="0 0 20 20"><rect x="1" y="1" width="15" height="14" fill="#f3eeee"/><path d="M4 4h9v8H4z" fill="none" stroke="#a93b47" stroke-width="2" stroke-dasharray="2 1.500"/><path d="M18 8l-8 9M10 9l9 8" stroke="#6598b0" stroke-width="2"/></svg></i>
      <i class="run"><svg viewBox="0 0 20 20"><rect x="1" y="2" width="18" height="17" rx="1" fill="#2f9bdf"/><path d="M1 5h18M5 0v4M15 0v4" stroke="#8bcaf0" stroke-width="2"/><path d="M4 9h12M4 12h12M4 15h12" stroke="#d6effc" stroke-width="2" stroke-dasharray="2 1.300"/></svg></i>
      <i class="run"><svg><use href="#chrome"/></svg><em class="r">J</em></i>
      <i class="run"><svg viewBox="0 0 20 20"><rect x="3" y="1" width="14" height="18" rx="1" fill="#45b2dd"/><path d="M5 6h10M5 9h10M5 12h10M5 15h10" stroke="#e3f5fc" stroke-width="1.300"/></svg></i>
      <i class="run"><svg viewBox="0 0 20 20"><path d="M6 1h13v18H6z" fill="#35a364"/><path d="M12 1h7v6h-7zM6 13h6v6H6z" fill="#2a8552"/><path d="M0 5h11v11H0z" fill="#17703f"/><path d="M3 8l5 6M8 8l-5 6" stroke="#fff" stroke-width="1.700"/></svg></i>
    </div>
    <div class="tray">
      <svg viewBox="0 0 12 12"><path d="M1 8l5-5 5 5" fill="none" stroke="#ddd"/></svg>
      <svg viewBox="0 0 12 12"><path d="M1 10a2.300 2.300 0 0 1 1-4.500 3.800 3.800 0 0 1 6.500-1A3 3 0 0 1 10 10z" fill="#e6e6e6"/></svg>
      <svg viewBox="0 0 12 12"><rect x="4.500" y="0" width="3" height="7" rx="1.500" fill="#78b0ad"/><path d="M2.500 5c0 5 7 5 7 0M6 9v3" fill="none" stroke="#78b0ad"/></svg>
      <svg class="net" viewBox="0 0 12 12"><path d="M7 1.500H1v8h9V6M3 11.500h5M8 1h3v4H8z" fill="none" stroke="#ddd" stroke-width="1.200"/></svg>
      <svg viewBox="0 0 12 12"><path d="M0 4h2l3-2.500v9L2 8H0zM7 4c1 1 1 3 0 4M8.500 2.500c2 2 2 5 0 7M10 1c2.500 3 2.500 7 0 10" fill="none" stroke="#ddd"/></svg>
      <svg viewBox="0 0 12 12"><rect x=".5" y="3" width="9.500" height="6" rx="1" fill="none" stroke="#ddd"/><path d="M2 4.500h4v3H2zM11 5h1v2h-1z" fill="#fff"/></svg>
      <div class="clock">7:03 AM<br>2/8/2023</div>
      <b>39</b>
    </div>
  </footer>
</div>
<script src="main.js"></script>
</body>
</html>
```

FILE: styles.css
```css
* { box-sizing: border-box; }
body { margin: 0; background: #000; font: 9px/11px Roboto, "Liberation Sans", sans-serif; color: #3c4043; }
button, input, select, textarea { font: inherit; color: inherit; }
button { border: 0; padding: 0; background: none; display: flex; align-items: center; justify-content: center; }
a { color: inherit; text-decoration: none; }
svg { display: block; flex: none; }
i, em { font-style: normal; }
.defs { position: absolute; width: 0; height: 0; }
.screen { height: 100vh; min-height: 645px; display: flex; flex-direction: column; overflow: hidden; }

/* browser */
.browser { background: #fff; margin-right: 2px; font-family: "Noto Sans", "Open Sans", sans-serif; }
.tabbar { height: 23px; background: #e2cffc; display: flex; align-items: stretch; }
.tabs { flex: none; width: 83%; margin-left: -4px; display: grid; grid-template-columns: repeat(15, 1fr); }
.tab { display: flex; align-items: center; padding-left: 8px; gap: 5px; min-width: 0; position: relative; color: #4e4359; font-size: 8px; }
.tab:not(.last):not(.active)::after { content: ""; position: absolute; right: 0; top: 5px; height: 13px; border-right: 1px solid #a899bb; }
.tab svg { width: 11px; height: 11px; }
.tab span { width: 14px; white-space: nowrap; }
.tab .x { width: 8px; height: 8px; }
.tab.active { background: #fff; border-radius: 6px 6px 0 0; }
.newtab { width: 26px; }
.newtab svg { width: 10px; height: 10px; }
.winctl { margin-left: auto; display: flex; align-items: center; gap: 19px; padding-right: 9px; color: #555; }
.winctl svg { width: 12px; height: 12px; }
.toolbar { height: 23px; display: flex; align-items: center; }
.nav { flex: none; width: 63px; display: flex; gap: 10px; }
.nav svg { width: 11px; height: 11px; }
.omnibox { flex: 1; min-width: 0; height: 19px; border-radius: 10px; background: #dfe0e1; display: flex; align-items: center; gap: 10px; padding: 0 8px 0 9px; color: #777; font-size: 9px; }
.omnibox svg { width: 11px; height: 11px; }
.omnibox .lock { width: 6px; height: 8px; }
.url { flex: 1; min-width: 0; white-space: nowrap; margin-left: -2px; }
.url b { font-weight: 400; color: #333; }
.exts { flex: none; width: 301px; margin-left: 3px; margin-right: 3px; display: grid; grid-template-columns: repeat(14, 1fr); }
.exts i { display: grid; place-items: center; position: relative; }
.exts svg { width: 11px; height: 11px; }
.exts i:first-child svg { width: 15px; height: 14px; }
.exts svg.sm { width: 8px; height: 8px; }
.exts em { position: absolute; left: 9px; top: 5px; background: #c2463a; color: #3a1010; font-size: 7px; line-height: 8px; border-radius: 2px; padding: 0 1px; }
.exts .face { width: 15px; height: 15px; border-radius: 50%; background: #8e35a5; color: #fff; place-self: center; }
.bookmarks { height: 23px; display: flex; align-items: center; justify-content: space-between; padding-right: 14px; font: 9px/11px Roboto, sans-serif; color: #333; white-space: nowrap; }
.bookmarks a { display: flex; align-items: center; gap: 4px; }
.bookmarks svg { width: 11px; height: 11px; }
.bookmarks .more { margin-left: 28px; font-size: 11px; }

/* ads header */
.adsbar { height: 43px; flex: none; margin-right: 2px; background: #5f6367; color: #fff; display: flex; align-items: center; padding-left: 5px; }
.burger svg { width: 13px; height: 10px; }
.logo { width: 21px; height: 20px; margin-left: 13px; }
.brand { margin-left: 8px; width: 93px; font-size: 16px; line-height: 20px; border-right: 1px solid #85888b; }
.crumbs { margin-left: 10px; font-size: 9px; line-height: 12px; }
.crumbs div { display: flex; align-items: center; gap: 5px; }
.crumbs svg { width: 9px; height: 9px; }
.crumbs strong { font-weight: 500; font-size: 10px; }
.tools { margin-left: auto; align-self: stretch; display: flex; gap: 14px; padding: 4px 3px 0 0; }
.tools button { flex-direction: column; justify-content: flex-start; line-height: 9px; font-size: 9px; font-weight: 400; position: relative; }
.tools svg { width: 16px; height: 16px; margin-bottom: 3px; }
.tools em { position: absolute; right: 12px; top: -3px; width: 13px; height: 13px; border-radius: 50%; background: #bd2f2f; line-height: 13px; font-size: 9px; }
.account { border-left: 1px solid #85888b; text-align: right; font-size: 9px; padding-left: 8px; white-space: nowrap; }
.avatar { width: 21px; height: 21px; margin: 0 15px 0 10px; border-radius: 50%; background: #8e35a5; text-align: center; line-height: 21px; font-size: 11px; }

/* campaigns sidebar */
.body { flex: 1; min-height: 0; display: flex; margin-right: 2px; }
.side { flex: none; width: 135px; background: #3e4043; color: #f1f1f1; position: relative; display: flex; flex-direction: column; }
.workspace { height: 38px; flex: none; display: flex; align-items: center; border-bottom: 1px solid #525458; padding: 0 9px 0 3px; gap: 12px; white-space: nowrap; }
.workspace span { color: #a9abad; }
.workspace .home { width: 13px; height: 14px; }
.workspace .tri { width: 7px; height: 7px; color: #77797c; margin-left: auto; }
.viewall { height: 26px; flex: none; line-height: 28px; padding-left: 1px; }
.side ul { list-style: none; margin: 0; padding: 0; flex: 1; min-height: 0; overflow: hidden; }
.side li { position: relative; padding: 8px 3px 8px 28px; }
.side li.on::after { content: ""; position: absolute; left: 15px; top: 5px; width: 5px; height: 5px; border-radius: 50%; background: #34803f; }
.side li svg { position: absolute; left: 2px; top: 8px; width: 14px; height: 12px; }
.side li.off { color: #a9abad; }
.side li.early { padding-right: 30px; }
.side li.cur { background: #5f6266; }
.side li.group::before { content: ""; position: absolute; left: 9px; top: 0; bottom: 0; border-left: 2px solid #606367; }
.sidefoot { flex: none; height: 34px; border-top: 1px solid #525458; display: flex; gap: 14px; font-size: 10px; font-weight: 500; padding-left: 7px; }
.collapse { position: absolute; right: -13px; top: 231px; width: 18px; height: 18px; border-radius: 50%; background: #3e4043; z-index: 2; }
.collapse svg { width: 11px; height: 11px; }
.recorder { position: absolute; left: 0; top: 97px; width: 17px; height: 49px; border-radius: 0 4px 4px 0; background: #151515; overflow: hidden; font-size: 8px; line-height: 16px; font-weight: 700; }
.recorder svg { width: 15px; height: 6px; }
.recorder b { display: block; width: 9px; height: 11px; margin-top: 9px; background: #e25445; }
.at { position: absolute; left: 0; bottom: 13px; width: 21px; height: 28px; background: #151515; border-radius: 0 4px 4px 0; line-height: 28px; padding-left: 4px; font-size: 9px; }

/* status */
.content { flex: 1; min-width: 0; display: flex; flex-direction: column; }
.status { height: 33px; flex: none; background: #fff; border-bottom: 1px solid #e2e4e6; display: grid; grid-template-columns: 65px 69px 71px 116px 119px 1fr 74px 16px 32px; align-items: center; padding: 0 21px 0 14px; color: #6a6d70; white-space: nowrap; }
.status b { font-weight: 400; color: #333; }
.status a { color: #3f62a8; }
.enabled { display: flex; align-items: center; gap: 2px; color: #444; }
.enabled::before { content: ""; width: 8px; height: 8px; border-radius: 50%; background: #2d8a3e; }
.status .details { display: flex; align-items: center; gap: 5px; font-weight: 500; font-size: 10px; }
.status svg { width: 11px; height: 12px; color: #444; }
.status .details svg { color: #3f62a8; width: 10px; }
.status button { justify-self: end; }

/* page nav */
.panes { flex: 1; min-height: 0; display: flex; }
.pages { flex: none; width: 124px; background: #edf1f3; display: flex; flex-direction: column; color: #55585c; }
.createbox { height: 51px; flex: none; border-bottom: 1px solid #dfe2e5; padding: 8px; }
.create { width: 87px; height: 32px; border-radius: 16px; background: #fff; box-shadow: 0 1px 3px #999; gap: 12px; font-size: 11px; font-weight: 500; }
.create svg { width: 16px; height: 16px; }
.links { flex: 1; min-height: 0; overflow: hidden; padding-left: 14px; margin-top: -7px; }
.links a { display: block; line-height: 27px; padding-left: 8px; position: relative; }
.links .sub::before, .links .open::before { content: ""; position: absolute; left: 1px; top: 11px; border-left: 3px solid #666; border-top: 2px solid transparent; border-bottom: 2px solid transparent; }
.suggested { border-top: 1px solid #d7dadd; margin: 1px 15px 0 0; line-height: 15px; padding-top: 1px; color: #777; }
.links .open { line-height: 22px; }
.links .open::before { left: 0; top: 10px; border-top: 3px solid #666; border-left: 2px solid transparent; border-right: 2px solid transparent; border-bottom: 0; }
.children { border-left: 2px solid #d5d8da; margin-top: 2px; }
.children a { padding-left: 6px; }
.children .sel { background: #d9dbdf; color: #34529d; box-shadow: -2px 0 #34529d; }
.links .showmore { display: flex; align-items: center; padding: 0; margin-left: -3px; gap: 6px; font-weight: 400; color: #333; }
.showmore svg { width: 9px; height: 9px; }
.scroll { width: 6px; flex: none; background: #e9ebed; padding-top: 12px; }
.scroll i { display: block; height: 100%; background: #b5b6b8; }
.gutter { flex: none; width: 5px; background: #eceff2; }

/* main */
main { flex: 1; min-width: 0; display: flex; flex-direction: column; background: #fff; }
.titlebar { position: relative; z-index: 1; height: 34px; flex: none; display: flex; align-items: center; padding: 0 19px 0 16px; border-bottom: 1px solid #aaa; box-shadow: 0 1px 2px #bbb; white-space: nowrap; }
h1 { flex: 1; margin: 0; font-size: 14px; font-weight: 400; line-height: 20px; color: #333; }
.titlebar label { color: #888; font-size: 10px; margin-right: 5px; }
.range { position: relative; width: 130px; }
.range select { appearance: none; width: 100%; height: 22px; background: #fff; border: 1px solid #999; border-radius: 3px; padding: 0 11px; font-size: 10px; }
.range svg { position: absolute; right: 10px; top: 7px; width: 7px; height: 8px; }
.titlebar button { margin-left: 8px; color: #555; }
.titlebar .dim { margin: 0 16px 0 15px; color: #aaa; }
.titlebar button svg { width: 11px; height: 12px; }
.titlebar a { color: #3965ab; font-size: 10px; font-weight: 500; }
.split { flex: 1; min-height: 0; display: grid; grid-template-columns: 1fr 1fr; border-bottom: 1px solid #dcdfe2; }
.form { padding: 21px 16px 0; }
.radios { display: flex; gap: 12px; font-size: 11px; font-weight: 500; line-height: 16px; }
.form label { display: flex; align-items: center; gap: 7px; color: #333; }
.form input[type=radio] { appearance: none; width: 14px; height: 14px; margin: 0 0 0 1px; border: 1px solid #666; border-radius: 50%; }
.form input[type=radio]:checked { border: 2px solid #3f6fca; background: radial-gradient(#3f6fca 3px, #fff 4px); }
.form .bulk { margin-top: 9px; line-height: 13px; }
.bulk input { appearance: none; position: relative; width: 12px; height: 12px; margin: 0 0 0 2px; background: #2f62c4; border-radius: 2px; }
.bulk input::after { content: ""; position: absolute; left: 4px; top: 1px; width: 4px; height: 7px; border: solid #fff; border-width: 0 2px 2px 0; rotate: 45deg; }
.bulkbox { position: relative; margin-top: 15px; height: 89px; border: 2px solid #b5545a; border-radius: 3px; }
.bulkbox textarea { display: block; width: 100%; height: 100%; resize: none; border: 0; outline: 0; background: none; overflow: hidden; padding: 5px 9px 0; line-height: 10px; font-size: 9px; }
.bulkbox textarea::selection { background: #5a87e2; color: #fff; }
.thumb { position: absolute; right: 10px; top: 5px; width: 6px; height: 12px; background: #b9b9b9; }
.gram { position: absolute; right: 21px; bottom: 6px; width: 16px; height: 16px; }
.error { display: flex; justify-content: space-between; color: #b4373e; padding: 1px 11px 0; line-height: 12px; font-size: 9px; white-space: nowrap; }
.country { margin-top: 9px; display: flex; align-items: center; gap: 10px; }
.country input { flex: 1; min-width: 0; height: 33px; border: 1px solid #999; border-radius: 3px; padding: 0 10px; background: #fff; }
.country input::placeholder { color: #666; opacity: 1; }
.primary { height: 22px; width: 54px; background: #3b6cdc; color: #fff; border-radius: 3px; font-weight: 500; font-size: 9px; }
.box { border: 1px solid #e5e6e8; padding: 10px; line-height: 12px; }
.nomatch { margin-top: 17px; height: 54px; color: #666; }
.narrow { margin-top: 11px; color: #333; }
.actions { height: 42px; flex: none; display: flex; align-items: center; gap: 12px; padding-left: 3px; }
.actions button { font-size: 10px; font-weight: 500; }
.actions .primary { width: 42px; height: 25px; }
.cancel { color: #4463a4; }

/* map */
.mapcol { min-width: 0; min-height: 0; display: flex; flex-direction: column; border-left: 1px solid #b9c3d4; }
.map { flex: 1; min-height: 0; position: relative; overflow: hidden; }
.world { position: absolute; inset: 0; width: 100%; height: 100%; }
.names { font-size: 7px; font-weight: 500; text-anchor: middle; fill: #222; stroke: #fff; stroke-width: 1px; paint-order: stroke; }
.areas { position: absolute; right: 38px; top: 6px; width: 137px; height: 42px; border-radius: 4px; background: #fff; display: flex; align-items: center; padding: 0 7px 0 18px; color: #999; font-size: 10px; white-space: nowrap; }
.areas svg { width: 7px; height: 8px; margin-left: 5px; }
.areas input { appearance: none; margin: 0 0 0 auto; width: 24px; height: 11px; border-radius: 6px; background: #c6c6c6; position: relative; }
.areas input::before { content: ""; position: absolute; left: -1px; top: -2px; width: 14px; height: 14px; border-radius: 50%; background: #fff; box-shadow: 0 1px 2px #888; }
.kebab { position: absolute; right: 14px; top: 10px; width: 4px; height: 14px; }
.zoom { position: absolute; right: 7px; bottom: 16px; width: 27px; height: 55px; background: #fff; display: grid; grid-template-rows: 1fr 1fr; padding: 0 4px; }
.zoom button + button { border-top: 1px solid #e4e4e4; }
.zoom svg { width: 12px; height: 12px; }
.gword { position: absolute; left: 6px; bottom: 2px; font-size: 12px; line-height: 14px; color: #fff; text-shadow: 0 0 1px #555, 0 0 1px #555; }
.terms { position: absolute; right: 0; bottom: 0; height: 9px; line-height: 9px; font-size: 7px; background: #dfe5ee; display: flex; gap: 9px; padding: 0 4px 0 3px; color: #222; }
.info { flex: none; background: #e7effc; display: flex; gap: 12px; padding: 8px 2px 4px 16px; color: #444; font-size: 10px; line-height: 14px; }
.info svg { width: 14px; height: 14px; }
.info p { margin: 0; }
.info a { color: #3f62a8; text-decoration: underline; }

/* taskbar */
.taskbar { height: 33px; flex: none; background: #202121; color: #eee; display: flex; align-items: center; font: 8px/12px "Noto Sans", sans-serif; }
.weather { flex: none; width: 241px; display: flex; align-items: center; gap: 6px; padding-left: 5px; }
.weather i { width: 14px; height: 14px; border-radius: 50%; background: radial-gradient(at 30% 30%, #f8ae35, #dc7617); }
.weather span { color: #bbb; }
.win { width: 16px; height: 16px; }
.tsearch { width: 66px; height: 22px; margin: 0 2px 0 10px; border-radius: 11px; background: #303031; gap: 4px; flex: none; }
.tsearch svg { width: 11px; height: 11px; }
.apps { flex: 0 1 444px; display: grid; grid-template-columns: repeat(15, 1fr); }
.apps i { height: 26px; display: grid; place-items: center; position: relative; }
.apps svg { width: 17px; height: 17px; }
.apps em { position: absolute; right: 3px; top: 1px; width: 9px; height: 9px; border-radius: 50%; font-size: 6px; line-height: 9px; text-align: center; color: #fff; }
.apps .mailapp em { right: -1px; top: 0; width: 18px; height: 11px; border-radius: 6px; background: #62bde9; color: #123; font-size: 8px; line-height: 11px; }
.apps .p { background: #a139b5; }
.apps .g { background: #52656e; }
.apps .r { background: #c33c26; }
.run::after, .act::after { content: ""; position: absolute; bottom: -1px; left: 13px; width: 4px; height: 2px; border-radius: 1px; background: #999; }
.act { background: #303336; border-radius: 3px; }
.act::after { left: 9px; width: 11px; background: #62bde9; }
.dell b { width: 15px; height: 15px; border: 1px solid #ddd; border-radius: 50%; font: 700 5px/13px Roboto, sans-serif; text-align: center; }
.tray { margin-left: auto; display: flex; align-items: center; gap: 5px; padding-right: 13px; }
.tray svg { width: 12px; height: 11px; }
.tray .net { margin-left: 5px; }
.clock { text-align: right; width: 37px; }
.tray b { width: 13px; height: 13px; border-radius: 50%; background: #45addd; color: #123; text-align: center; line-height: 13px; font-weight: 400; font-size: 7px; }
```

FILE: main.js
```js
const codes = document.getElementById("codes");
codes.focus();
codes.select();
codes.scrollTop = 0;
```
